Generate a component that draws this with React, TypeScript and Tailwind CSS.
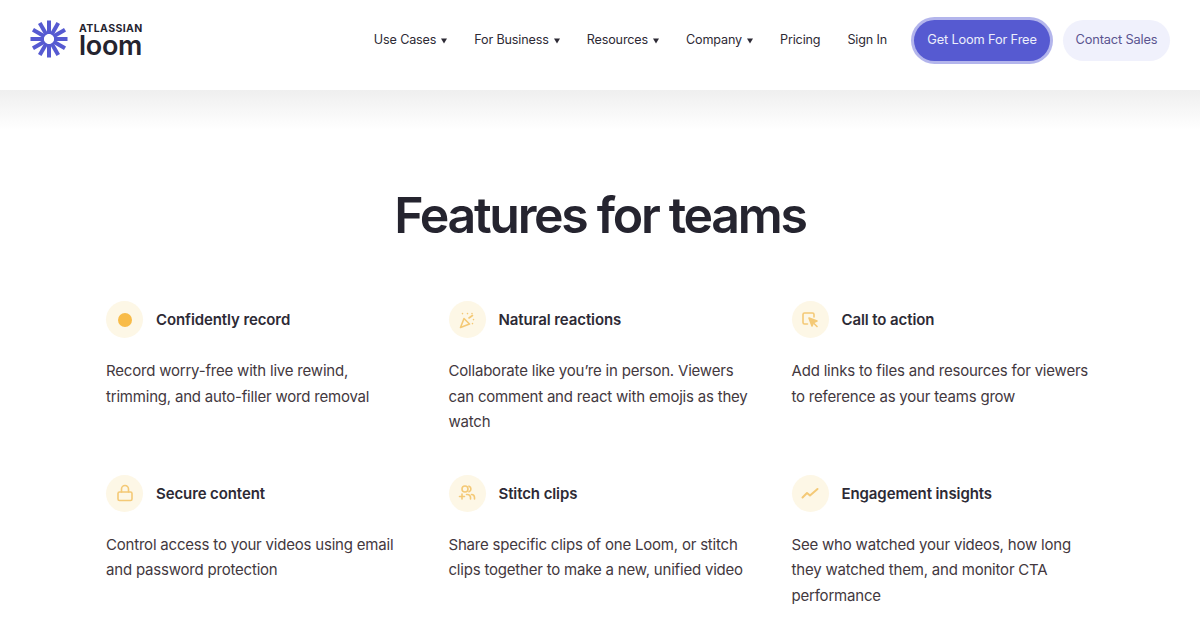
import type { ReactNode } from 'react';

function Sunburst() {
  const spokes = Array.from({ length: 12 }, (_, i) => i * 30);
  return (
    <svg width="38" height="38" viewBox="0 0 38 38" className="shrink-0 mb-[2px]">
      {spokes.map((angle) => (
        <rect key={angle} x="17" y="0.5" width="4" height="13.5" fill="#565ad1" transform={`rotate(${angle} 19 19)`} />
      ))}
    </svg>
  );
}

function NavItem({ label, caret }: { label: string; caret?: boolean }) {
  return (
    <span className="flex items-center gap-[5px] text-[12.6px] tracking-[-0.15px] text-[#2d2a35] whitespace-nowrap">
      {label}
      {caret && (
        <svg width="6" height="6" viewBox="0 0 6 6" className="mt-[2px]">
          <path d="M0 0.5h6L3 5.5z" fill="#2d2a35" />
        </svg>
      )}
    </span>
  );
}

const stroke = { fill: 'none', stroke: '#f4c976', strokeWidth: 1.6, strokeLinecap: 'round', strokeLinejoin: 'round' } as const;

const icons: Record<string, ReactNode> = {
  record: <circle cx="9" cy="9" r="7" fill="#f8bb48" />,
  party: (
    <g {...stroke}>
      <path d="M6 7.5L2.5 16.5l9-3.5z" />
      <path d="M4.5 2.5v.1M9.5 2.5v.1M14 2.5v.1M11 7l3.5-2.5M15.5 8.5v.1M14.5 12.5v.1" />
    </g>
  ),
  cursor: (
    <g {...stroke}>
      <path d="M6.5 13H3.5A1.5 1.5 0 0 1 2 11.5v-8A1.5 1.5 0 0 1 3.5 2h8A1.5 1.5 0 0 1 13 3.5V6" />
      <path d="M8 7l8 3-3.5 1.5L11 15z" fill="#f4c976" />
      <path d="M13 12.5l3 3" />
    </g>
  ),
  lock: (
    <g {...stroke}>
      <rect x="2" y="8" width="14" height="8.5" rx="1.5" />
      <path d="M5.5 8V5a3.5 3.5 0 0 1 7 0v3" />
    </g>
  ),
  users: (
    <g {...stroke}>
      <circle cx="7" cy="5" r="3" />
      <path d="M11 2.2a3 3 0 0 1 0 5.6" />
      <path d="M1.5 12.5h5M4 10v5" />
      <path d="M8.5 10.5h1a3 3 0 0 1 3 3V15M13.5 10.5a3 3 0 0 1 3 3V15" />
    </g>
  ),
  chart: <path {...stroke} strokeWidth="2" d="M1.5 13.5L6 9l3 2.5 7.5-6.5" />,
};

const features = [
  { icon: 'record', title: 'Confidently record', body: 'Record worry-free with live rewind, trimming, and auto-filler word removal' },
  { icon: 'party', title: 'Natural reactions', body: 'Collaborate like you’re in person. Viewers can comment and react with emojis as they watch' },
  { icon: 'cursor', title: 'Call to action', body: 'Add links to files and resources for viewers to reference as your teams grow' },
  { icon: 'lock', title: 'Secure content', body: 'Control access to your videos using email and password protection' },
  { icon: 'users', title: 'Stitch clips', body: 'Share specific clips of one Loom, or stitch clips together to make a new, unified video' },
  { icon: 'chart', title: 'Engagement insights', body: 'See who watched your videos, how long they watched them, and monitor CTA performance' },
];

function Feature({ icon, title, body }: { icon: string; title: string; body: string }) {
  return (
    <div className="w-[305px]">
      <div className="flex items-center gap-[13px]">
        <div className="w-[37px] h-[37px] rounded-full bg-[#fdf7e6] flex items-center justify-center shrink-0">
          <svg width="18" height="18" viewBox="0 0 18 18">{icons[icon]}</svg>
        </div>
        <h3 className="mt-[2px] text-[15px] font-semibold tracking-[-0.1px] text-[#2d2a35]">{title}</h3>
      </div>
      <p className="mt-[20px] text-[15px] tracking-[-0.2px] leading-[25.6px] text-[#43383e]">{body}</p>
    </div>
  );
}

export default function App() {
  return (
    <div className="w-[1200px] h-[630px] overflow-hidden bg-white font-['Inter',sans-serif]">
      <header className="h-[90px] flex items-center pb-[10px] px-[30px]">
        <div className="flex items-center gap-[11px]">
          <Sunburst />
          <div className="flex flex-col">
            <span className="text-[10.5px] font-bold tracking-[0.4px] leading-[11px] text-[#25242f]">ATLASSIAN</span>
            <span className="mt-[1px] text-[27px] font-semibold leading-[22px] tracking-[-0.3px] text-[#25242f]">loom</span>
          </div>
        </div>
        <nav className="ml-auto flex items-center">
          <div className="flex items-center gap-[27px]">
            <NavItem label="Use Cases" caret />
            <NavItem label="For Business" caret />
            <NavItem label="Resources" caret />
            <NavItem label="Company" caret />
            <NavItem label="Pricing" />
            <NavItem label="Sign In" />
          </div>
          <button className="ml-[27px] w-[136px] h-[41px] rounded-full bg-[#565ad1] text-[#eceefb] text-[12.8px] tracking-[-0.15px] ring-3 ring-[#b3b5ec] whitespace-nowrap">Get Loom For Free</button>
          <button className="ml-[13px] w-[107px] h-[41px] rounded-full bg-[#f0f1fc] text-[#5a5490] text-[12.8px] tracking-[-0.15px] whitespace-nowrap">Contact Sales</button>
        </nav>
      </header>
      <div className="h-[40px] bg-gradient-to-b from-[#efefef] to-white" />
      <main>
        <h1 className="mt-[50px] text-center text-[50px] leading-[70px] font-semibold tracking-[-2.3px] text-[#25242f]">Features for teams</h1>
        <div className="mt-[51px] ml-[106px] grid grid-cols-[342.5px_343px_310px] auto-rows-[173.5px]">
          {features.map((f) => (
            <Feature key={f.title} {...f} />
          ))}
        </div>
      </main>
    </div>
  );
}
